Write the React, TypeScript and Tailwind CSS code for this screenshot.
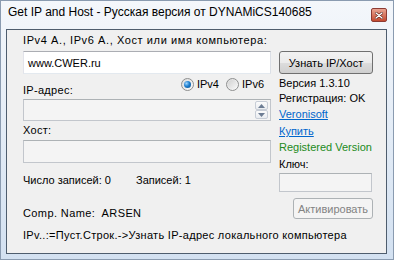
import React from 'react';

function Radio({ checked }: { checked?: boolean }) {
  return (
    <span className="relative flex h-[13px] w-[13px] items-center justify-center rounded-full border border-[#8e8f8f] bg-gradient-to-br from-[#dcdcdc] to-[#fbfbfb]">
      {checked ? (
        <span className="h-[7px] w-[7px] rounded-full bg-[radial-gradient(circle_at_35%_35%,#9fd6ff_0%,#1f7fcf_45%,#0a4c86_100%)]" />
      ) : (
        <span className="h-[9px] w-[9px] rounded-full bg-gradient-to-br from-[#d2d2d2] to-[#f7f7f7]" />
      )}
    </span>
  );
}

function SpinArrow({ up }: { up?: boolean }) {
  return (
    <div className="flex h-[9px] w-[13px] items-center justify-center rounded-[2px] border border-[#c7cdd6] bg-gradient-to-b from-[#fbfbfb] to-[#e9ecf0]">
      <svg width="7" height="4" viewBox="0 0 7 4">
        {up ? <path d="M0 4 L3.5 0 L7 4 Z" fill="#6c7c93" /> : <path d="M0 0 L3.5 4 L7 0 Z" fill="#6c7c93" />}
      </svg>
    </div>
  );
}

export default function App() {
  const btn =
    'flex items-center justify-center rounded-[3px] border border-[#707070] bg-[linear-gradient(#f2f2f2_0%,#ebebeb_50%,#dddddd_50%,#cfcfcf_100%)] text-[11px] text-black';

  return (
    <div className="flex h-[260px] w-[394px] flex-col border border-[#8a9bb0] bg-gradient-to-b from-[#f4f7fb] to-[#d3e1f1] font-['Liberation_Sans',sans-serif] text-black">
      {/* Title bar */}
      <div className="flex h-[28px] items-start justify-between pl-[7px] pr-[6px]">
        <span className="mt-[4px] text-[12px] leading-[14px]">Get IP and Host - Русская версия от DYNAMiCS140685</span>
        <div className="mt-[7px] flex h-[14px] w-[16px] items-center justify-center rounded-[2px] border border-[#8d3b33] bg-gradient-to-b from-[#e9a492] to-[#c4492f]">
          <svg width="8" height="7" viewBox="0 0 8 7">
            <path d="M1 1 L7 6 M7 1 L1 6" stroke="#5a2018" strokeWidth="2.6" strokeLinecap="round" />
            <path d="M1 1 L7 6 M7 1 L1 6" stroke="#ffffff" strokeWidth="1.4" strokeLinecap="round" />
          </svg>
        </div>
      </div>

      {/* Client area */}
      <div className="mb-[5px] ml-[5px] mr-[6px] flex flex-1 flex-col border border-[#4e5d6e] bg-[#f0f0f0] pl-[16px] pt-[3px] text-[11px] leading-[14px]">
        <div className="tracking-[0.6px]">IPv4 А., IPv6 А., Хост или имя компьютера:</div>

        <div className="mt-[4px] flex gap-[8px]">
          <div className="flex h-[23px] w-[248px] items-center border border-[#abadb3] border-b-[#e3e9ef] border-l-[#e2e3ea] border-r-[#dbdfe6] bg-white pl-[4px] text-[11px]">
            www.CWER.ru
          </div>
          <div className={`${btn} h-[23px] w-[94px]`}>Узнать IP/Хост</div>
        </div>

        <div className="flex gap-[8px]">
          {/* Left column */}
          <div className="flex w-[248px] flex-col">
            <div className="flex h-[23px] justify-between pr-[7px]">
              <span className="self-end tracking-[0.3px]">IP-адрес:</span>
              <div className="mt-[3px] flex items-center self-start">
                <Radio checked />
                <span className="ml-[3px]">IPv4</span>
                <span className="ml-[7px]">
                  <Radio />
                </span>
                <span className="ml-[3px]">IPv6</span>
              </div>
            </div>
            <div className="mt-[2px] flex h-[22px] items-center justify-end border border-[#c2c6cc] border-t-[#adb2b5] bg-[#f4f4f4] pr-[2px]">
              <div className="flex flex-col">
                <SpinArrow up />
                <SpinArrow />
              </div>
            </div>
            <div className="mt-[2px] tracking-[0.3px]">Хост:</div>
            <div className="mt-[3px] h-[23px] border border-[#c2c6cc] border-t-[#adb2b5] bg-[#f4f4f4]" />
            <div className="mt-[10px] flex">
              <span className="w-[113px]">Число записей: 0</span>
              <span>Записей: 1</span>
            </div>
            <div className="mt-[19px] whitespace-pre tracking-[0.4px]">Comp. Name:  ARSEN</div>
          </div>

          {/* Right column */}
          <div className="flex w-[94px] flex-col">
            <div className="mt-[2px]">Версия 1.3.10</div>
            <div className="mt-[1px]">Регистрация: OK</div>
            <div className="mt-[2px] text-[#0066cc] underline">Veronisoft</div>
            <div className="mt-[3px] text-[#0066cc] underline">Купить</div>
            <div className="mt-[2px] text-[#228b22]">Registered Version</div>
            <div className="mt-[3px]">Ключ:</div>
            <div className="mt-[2px] h-[19px] w-[93px] border border-[#c2c6cc] border-t-[#adb2b5] bg-[#f4f4f4]" />
            <div className="mt-[6px] flex h-[21px] w-[80px] items-center justify-center self-end rounded-[3px] border border-[#adb2b5] bg-[#f4f4f4] text-[#838383]">
              Активировать
            </div>
          </div>
        </div>

        <div className="mt-[8px] tracking-[0.3px]">IPv..:=Пуст.Строк.-&gt;Узнать IP-адрес локального компьютера</div>
      </div>
    </div>
  );
}
